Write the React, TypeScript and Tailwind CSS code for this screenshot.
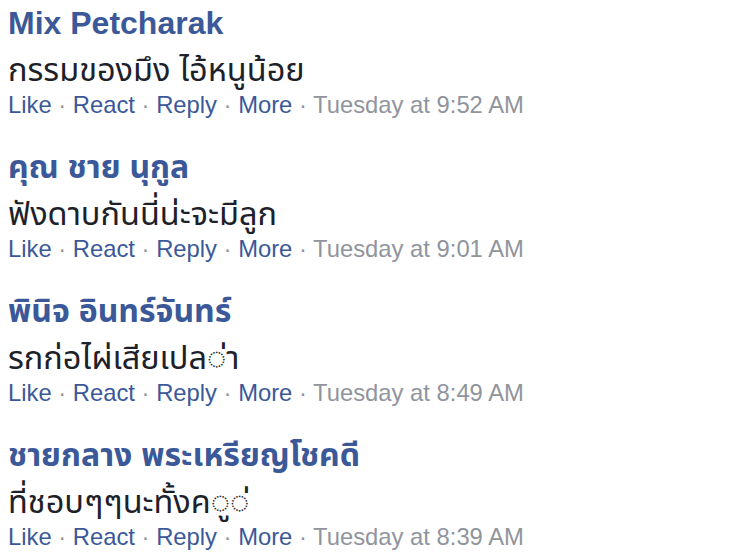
import React from "react";

type C = { name: string; text: string; time: string };

const comments: C[] = [
  { name: "Mix Petcharak", text: "กรรมของมึง ไอ้หนูน้อย", time: "Tuesday at 9:52 AM" },
  { name: "คุณ ชาย นุกูล", text: "ฟังดาบกันนี่น่ะจะมีลูก", time: "Tuesday at 9:01 AM" },
  { name: "พินิจ อินทร์จันทร์", text: "รกก่อไผ่เสียเปล\u25CC\u0E48า", time: "Tuesday at 8:49 AM" },
  { name: "ชายกลาง พระเหรียญโชคดี", text: "ที่ชอบๆๆนะทั้งค\u25CC\u0E39\u25CC\u0E48", time: "Tuesday at 8:39 AM" },
];

const font = { fontFamily: '"Liberation Sans", "Noto Sans Thai", "Noto Sans", sans-serif' };

export default function App() {
  return (
    <div className="w-[735px] h-[555px] bg-white overflow-hidden" style={font}>
      {comments.map((c, i) => (
        <div key={i} className="h-[144px] pt-[5px] pl-[8px]">
          <div className="text-[32px] leading-[36px] font-bold text-[#3b5998] whitespace-nowrap">{c.name}</div>
          <div className="mt-[5px] text-[32.5px] leading-[48px] text-[#1d2129] whitespace-nowrap">{c.text}</div>
          <div className="text-[23.8px] leading-[22px] whitespace-nowrap">
            <span className="text-[#3b5998]">Like</span>
            <span className="text-[#90949c]"> · </span>
            <span className="text-[#3b5998]">React</span>
            <span className="text-[#90949c]"> · </span>
            <span className="text-[#3b5998]">Reply</span>
            <span className="text-[#90949c]"> · </span>
            <span className="text-[#3b5998]">More</span>
            <span className="text-[#90949c]"> · {c.time}</span>
          </div>
        </div>
      ))}
    </div>
  );
}
